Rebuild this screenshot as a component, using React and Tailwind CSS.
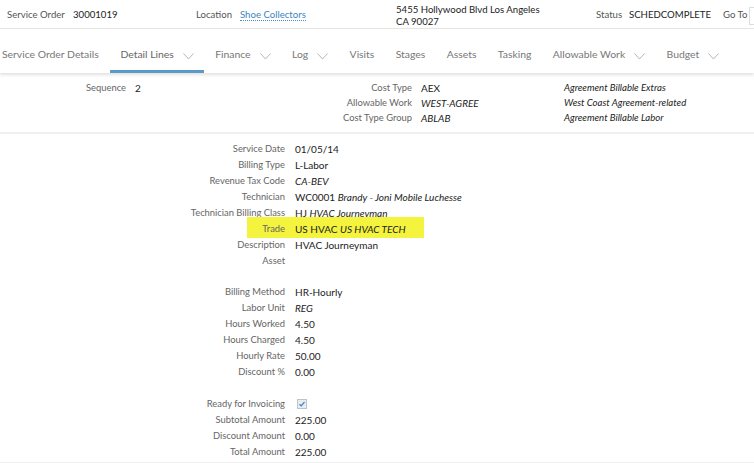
const tabs = [
  { name: "Service Order Details" },
  { name: "Detail Lines", menu: true, active: true },
  { name: "Finance", menu: true },
  { name: "Log", menu: true },
  { name: "Visits" },
  { name: "Stages" },
  { name: "Assets" },
  { name: "Tasking" },
  { name: "Allowable Work", menu: true },
  { name: "Budget", menu: true },
];

function Chevron() {
  return (
    <svg width="11" height="7" viewBox="0 0 11 7" className="ml-[9px] mt-[3px]">
      <path d="M0.5 0.5 L5.5 6 L10.5 0.5" fill="none" stroke="#a5a5a5" strokeWidth="0.8" />
    </svg>
  );
}

function Row({ label, children, highlight }) {
  return (
    <div className="relative flex h-[16px] items-center">
      {highlight && (
        <div className="absolute left-[247px] top-[-4px] h-[21px] w-[177px] bg-[#f4f33e] blur-[0.5px]" />
      )}
      <div className="relative w-[285px] text-right text-[9.4px] text-[#666]">{label}</div>
      <div className="relative pl-[10px] text-[#222]">{children}</div>
    </div>
  );
}

export default function App() {
  return (
    <div
      className="h-[463px] w-[754px] overflow-hidden bg-white text-[10px]"
      style={{ fontFamily: "Lato, 'Open Sans', sans-serif" }}
    >
      {/* header */}
      <div className="flex h-[29px] items-center border-b border-[#e6e6e6] pt-[3px] text-[9.6px] whitespace-nowrap">
        <div className="w-[73px] shrink-0 pl-[7px] text-[#555]">Service Order</div>
        <div className="w-[123px] shrink-0 text-[#222]">30001019</div>
        <div className="w-[44px] shrink-0 text-[#555]">Location</div>
        <div className="w-[156px] shrink-0">
          <span className="border-b border-dotted border-[#4a90c8] text-[#3c85c0]">Shoe Collectors</span>
        </div>
        <div className="w-[200px] shrink-0 leading-[12px] text-[#222]">
          <div>5455 Hollywood Blvd Los Angeles</div>
          <div>CA 90027</div>
        </div>
        <div className="w-[33px] shrink-0 text-[#555]">Status</div>
        <div className="w-[94px] shrink-0 text-[#222]">SCHEDCOMPLETE</div>
        <div className="w-[26px] shrink-0 text-[#555]">Go To</div>
        <div className="h-[18px] w-[20px] shrink-0 border border-[#ddd]" />
      </div>

      {/* tabs */}
      <div className="relative flex h-[44px] items-stretch whitespace-nowrap text-[10.4px] text-[#777] shadow-[0_2px_3px_rgba(0,0,0,0.12)]">
        {tabs.map((t, i) => (
          <div
            key={t.name}
            className={`relative flex shrink-0 items-center pt-[8px] ${i === 0 ? "pl-[2px] pr-[11px]" : "px-[10.7px]"} ${
              t.active ? "text-[#666]" : ""
            }`}
          >
            <span>{t.name}</span>
            {t.menu && <Chevron />}
            {t.active && <div className="absolute bottom-0 left-0 right-0 h-[3px] bg-[#5b9ac6]" />}
          </div>
        ))}
      </div>

      {/* section 1 */}
      <div className="flex h-[61px] border-b-2 border-[#f0f0f0] pt-[8px] whitespace-nowrap">
        <div className="flex h-[15px] w-[145px] items-center">
          <div className="w-[126px] text-right text-[9.4px] text-[#666]">Sequence</div>
          <div className="pl-[9px] text-[#222]">2</div>
        </div>
        <div className="flex flex-col">
          {[
            ["Cost Type", "AEX", "Agreement Billable Extras", false],
            ["Allowable Work", "WEST-AGREE", "West Coast Agreement-related", true],
            ["Cost Type Group", "ABLAB", "Agreement Billable Labor", true],
          ].map(([l, v, d, it]) => (
            <div key={l} className="flex h-[15px] items-center">
              <div className="w-[267px] text-right text-[9.4px] text-[#666]">{l}</div>
              <div className={`w-[152px] pl-[9px] text-[#222] ${it ? "italic" : ""}`}>{v}</div>
              <div className="text-[9.6px] italic text-[#222]">{d}</div>
            </div>
          ))}
        </div>
      </div>

      {/* section 2 */}
      <div className="border-b-2 border-[#f0f0f0] pt-[7px] pb-[2px] whitespace-nowrap">
        <Row label="Service Date">01/05/14</Row>
        <Row label="Billing Type">L-Labor</Row>
        <Row label="Revenue Tax Code">
          <span className="italic">CA-BEV</span>
        </Row>
        <Row label="Technician">
          WC0001 <span className="italic">Brandy - Joni Mobile Luchesse</span>
        </Row>
        <Row label="Technician Billing Class">
          HJ <span className="italic">HVAC Journeyman</span>
        </Row>
        <Row label="Trade" highlight>
          US HVAC <span className="italic">US HVAC TECH</span>
        </Row>
        <Row label="Description">HVAC Journeyman</Row>
        <Row label="Asset" />

        <div className="h-[15px]" />
        <Row label="Billing Method">HR-Hourly</Row>
        <Row label="Labor Unit">
          <span className="italic">REG</span>
        </Row>
        <Row label="Hours Worked">4.50</Row>
        <Row label="Hours Charged">4.50</Row>
        <Row label="Hourly Rate">50.00</Row>
        <Row label="Discount %">0.00</Row>

        <div className="h-[16px]" />
        <Row label="Ready for Invoicing">
          <div className="ml-[2px] flex h-[10px] w-[10px] items-center justify-center border border-[#b8c4d0] bg-[#e8edf2]">
            <svg width="8" height="8" viewBox="0 0 8 8">
              <path d="M1.5 4.2 L3.2 5.8 L6.5 2" fill="none" stroke="#4a82b8" strokeWidth="1.2" />
            </svg>
          </div>
        </Row>
        <Row label="Subtotal Amount">225.00</Row>
        <Row label="Discount Amount">0.00</Row>
        <Row label="Total Amount">225.00</Row>
      </div>
    </div>
  );
}
